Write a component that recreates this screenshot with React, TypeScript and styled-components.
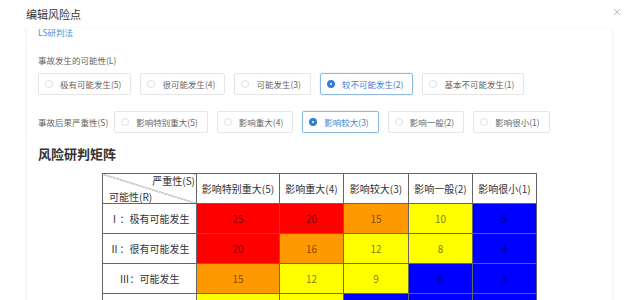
import React from "react";
import styled, { createGlobalStyle } from "styled-components";

const Global = createGlobalStyle`
  html, body { margin: 0; padding: 0; background: #fff; overflow: hidden; }
  body { font-family: "Noto Sans CJK SC", "Noto Sans", sans-serif; color: #333; }
`;

const Dialog = styled.div`
  width: 640px;
  height: 300px;
  overflow: hidden;
  background: #fff;
`;

const Header = styled.div`
  height: 28px;
  display: flex;
  align-items: center;
  justify-content: space-between;
  padding: 0 19px 0 26px;
`;

const Title = styled.div`
  font-size: 11px;
  line-height: 14px;
  color: #333;
`;

const Close = styled.button`
  border: 0;
  background: none;
  padding: 0;
  width: 9px;
  height: 9px;
  display: flex;
  align-items: center;
  justify-content: center;
  margin-top: -4px;
  cursor: pointer;
`;

const Panel = styled.div`
  margin: 0 28px 0 27px;
  padding: 0 11px;
  height: 300px;
  box-shadow: -2px 0 3px -1px rgba(0, 0, 0, 0.07), 2px 0 3px -1px rgba(0, 0, 0, 0.07);
`;

const MethodLink = styled.div`
  font-size: 8.5px;
  line-height: 9px;
  color: #4a8fd6;
`;

const FieldLabel = styled.div`
  font-size: 8.5px;
  line-height: 12px;
  color: #666;
  margin-top: 17px;
  white-space: nowrap;
`;

const RadioGroup = styled.div<{ $top: number }>`
  display: flex;
  gap: 9px;
  margin-top: ${(p) => p.$top}px;
`;

const InlineField = styled.div`
  display: flex;
  align-items: center;
  gap: 6px;
  margin-top: 16px;
  ${FieldLabel} { margin-top: 0; }
  ${RadioGroup} { margin-top: 0; }
`;

const RadioButton = styled.div<{ $on?: boolean }>`
  height: 22px;
  box-sizing: border-box;
  display: flex;
  align-items: center;
  gap: 7px;
  padding: 0 9px 0 6px;
  border: 1px solid ${(p) => (p.$on ? "#8db9e4" : "#e6e6e6")};
  border-radius: 2px;
  font-size: 8.5px;
  line-height: 10px;
  color: ${(p) => (p.$on ? "#3c86d3" : "#666")};
  white-space: nowrap;
  box-shadow: ${(p) => (p.$on ? "0 0 2px rgba(60,134,211,0.25)" : "none")};
`;

const Dot = styled.span<{ $on?: boolean }>`
  width: 8px;
  height: 8px;
  box-sizing: border-box;
  border-radius: 50%;
  flex: none;
  border: ${(p) => (p.$on ? "3px solid #2f80d6" : "1px solid #e0e0e0")};
  background: #fff;
`;

const Heading = styled.div`
  font-size: 13px;
  line-height: 18px;
  font-weight: 700;
  color: #333;
  margin-top: 12px;
`;

const Matrix = styled.table`
  margin: 10px 0 0 64px;
  border-collapse: collapse;
  table-layout: fixed;
  width: 435px;
`;

const Cell = styled.td<{ $bg?: string }>`
  height: 29px;
  padding: 0;
  border: 1px solid #666;
  text-align: center;
  vertical-align: middle;
  font-size: 10px;
  line-height: 12px;
  white-space: nowrap;
  background: ${(p) => p.$bg || "#fff"};
  color: ${(p) => (p.$bg ? "rgba(0,0,0,0.55)" : "#333")};
`;

const HeadCell = styled.th`
  height: 29px;
  padding: 0;
  border: 1px solid #666;
  font-weight: 400;
  font-size: 10px;
  line-height: 12px;
  color: #333;
  white-space: nowrap;
  background: #fff;
`;

const DiagonalCell = styled.th`
  height: 29px;
  padding: 0 1px 0 6px;
  border: 1px solid #666;
  font-weight: 400;
  font-size: 10px;
  line-height: 12px;
  color: #333;
  background: linear-gradient(
    to top right,
    transparent calc(50% - 0.6px),
    #777 50%,
    transparent calc(50% + 0.6px)
  );
`;

const DiagonalInner = styled.div`
  display: flex;
  flex-direction: column;
  height: 29px;
  justify-content: space-between;
  padding: 1px 0 0;
  box-sizing: border-box;
`;

const Sev = styled.span`
  align-self: flex-end;
`;

const Pos = styled.span`
  align-self: flex-start;
`;

const RED = "#ff0000";
const ORANGE = "#ff9900";
const YELLOW = "#ffff00";
const BLUE = "#0000ff";

const likelihood = [
  { label: "极有可能发生(5)" },
  { label: "很可能发生(4)" },
  { label: "可能发生(3)" },
  { label: "较不可能发生(2)", on: true },
  { label: "基本不可能发生(1)" },
];

const severity = [
  { label: "影响特别重大(5)" },
  { label: "影响重大(4)" },
  { label: "影响较大(3)", on: true },
  { label: "影响一般(2)" },
  { label: "影响很小(1)" },
];

const columns = ["影响特别重大(5)", "影响重大(4)", "影响较大(3)", "影响一般(2)", "影响很小(1)"];

const colorFor = (v: number) => (v >= 20 ? RED : v >= 15 ? ORANGE : v >= 8 ? YELLOW : BLUE);

// The fourth row only shows its top edge in view, so its labels stay out of the frame.
const rows = [
  { label: "Ⅰ：极有可能发生", r: 5, shown: true },
  { label: "Ⅱ：很有可能发生", r: 4, shown: true },
  { label: "Ⅲ：可能发生", r: 3, shown: true },
  { label: "Ⅳ：较不可能发生", r: 2, shown: false },
];

const colWidths = [94, 83, 64, 65, 64, 64];

export default function App() {
  return (
    <>
      <Global />
      <Dialog>
        <Header>
          <Title>编辑风险点</Title>
          <Close aria-label="关闭">
            <svg width="8" height="8" viewBox="0 0 8 8">
              <path d="M1 1L7 7M7 1L1 7" stroke="#b5b5b5" strokeWidth="0.9" />
            </svg>
          </Close>
        </Header>
        <Panel>
          <MethodLink>LS研判法</MethodLink>
          <FieldLabel>事故发生的可能性(L)</FieldLabel>
          <RadioGroup $top={7}>
            {likelihood.map((o) => (
              <RadioButton key={o.label} $on={o.on}>
                <Dot $on={o.on} />
                {o.label}
              </RadioButton>
            ))}
          </RadioGroup>
          <InlineField>
            <FieldLabel>事故后果严重性(S)</FieldLabel>
            <RadioGroup $top={0}>
              {severity.map((o) => (
                <RadioButton key={o.label} $on={o.on}>
                  <Dot $on={o.on} />
                  {o.label}
                </RadioButton>
              ))}
            </RadioGroup>
          </InlineField>
          <Heading>风险研判矩阵</Heading>
          <Matrix>
            <colgroup>
              {colWidths.map((w, i) => (
                <col key={i} style={{ width: w }} />
              ))}
            </colgroup>
            <thead>
              <tr>
                <DiagonalCell>
                  <DiagonalInner>
                    <Sev>严重性(S)</Sev>
                    <Pos>可能性(R)</Pos>
                  </DiagonalInner>
                </DiagonalCell>
                {columns.map((c) => (
                  <HeadCell key={c}>{c}</HeadCell>
                ))}
              </tr>
            </thead>
            <tbody>
              {rows.map((row) => (
                <tr key={row.label}>
                  <Cell aria-label={row.label}>{row.shown ? row.label : ""}</Cell>
                  {[5, 4, 3, 2, 1].map((s) => {
                    const v = row.r * s;
                    return (
                      <Cell key={s} $bg={colorFor(v)}>
                        {row.shown ? v : ""}
                      </Cell>
                    );
                  })}
                </tr>
              ))}
            </tbody>
          </Matrix>
        </Panel>
      </Dialog>
    </>
  );
}
